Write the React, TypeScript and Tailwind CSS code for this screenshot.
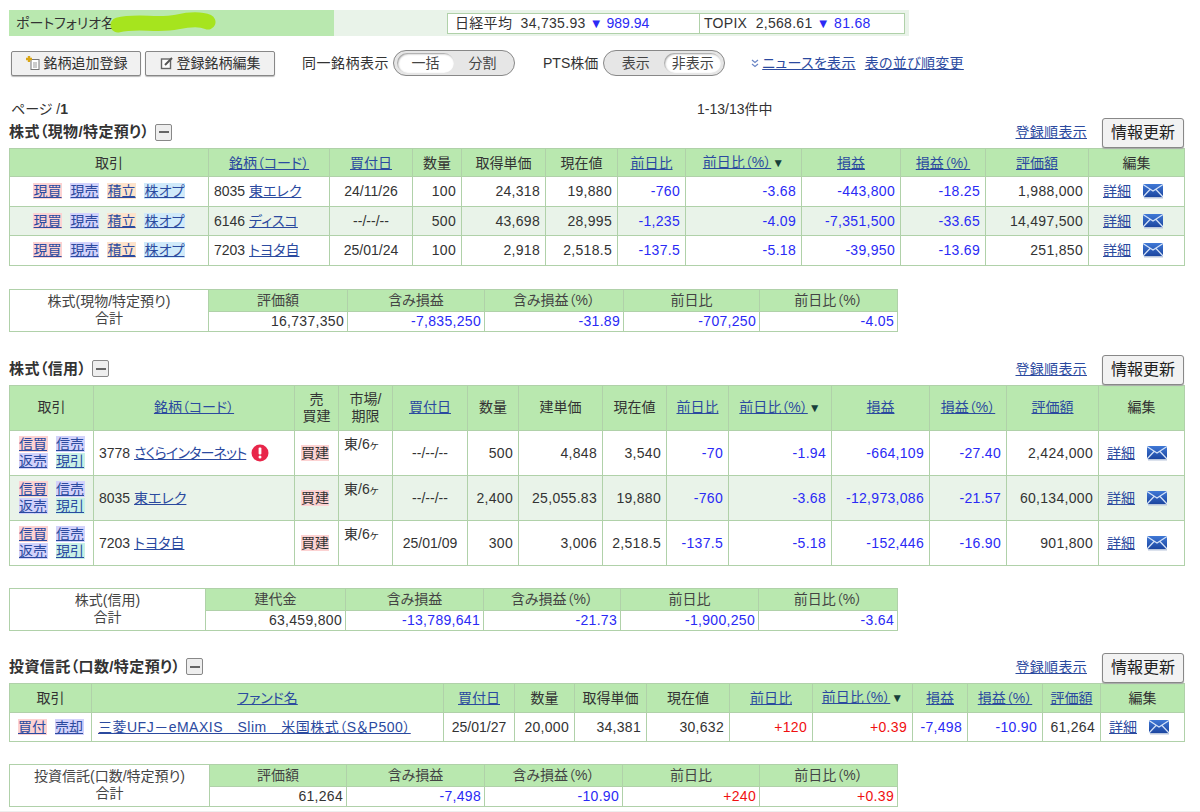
import type { ReactNode } from 'react'

type Col = { label: ReactNode; w: string; link?: boolean; arrow?: boolean }
type Tone = 'up' | 'down' | 'plain'
type Sum = { label: string; w: string; value: string; tone: Tone }

const tagColors: Record<string, string> = {
  現買: 'bg-[#fcd2d2]',
  現売: 'bg-[#d2d2fb]',
  積立: 'bg-[#fde3cb]',
  株オプ: 'bg-[#d0eafa]',
  信買: 'bg-[#fcd2d2]',
  信売: 'bg-[#d2d2fb]',
  返売: 'bg-[#d2d2fb]',
  現引: 'bg-[#c8f0e6]',
  買付: 'bg-[#fcd2d2]',
  売却: 'bg-[#d2d2fb]',
}

const toneClass = (n: string) => (n.startsWith('+') ? 'text-[#f01010]' : n.startsWith('-') ? 'text-[#2a2af5]' : 'text-[#333]')

const border = 'border border-[#b0d1a9]'
const linkClass = 'text-[#2b4a9f] underline'

function Tag({ name }: { name: string }) {
  return <a className={`${linkClass} ${tagColors[name]} inline-block leading-[16px] px-[0.5px] text-center`}>{name}</a>
}

function MailIcon() {
  return (
    <svg width="22" height="16" viewBox="0 0 22 16" className="inline-block">
      <defs>
        <linearGradient id="mail" x1="0" y1="0" x2="0" y2="1">
          <stop offset="0" stopColor="#3f78d6" />
          <stop offset="1" stopColor="#1c46a0" />
        </linearGradient>
      </defs>
      <rect x="1" y="1" width="20" height="13" fill="url(#mail)" />
      <path d="M1 1.5 L11 8 L21 1.5 M1 14 L8 6.5 M21 14 L14 6.5" stroke="#d5e3f8" strokeWidth="1.2" fill="none" />
      <rect x="2" y="14" width="19" height="1.5" fill="#b9c6dc" />
    </svg>
  )
}

function AlertIcon() {
  return (
    <svg width="18" height="18" viewBox="0 0 18 18" className="inline-block ml-[5px] align-[-4px]">
      <circle cx="9" cy="9" r="8.5" fill="#e8264a" />
      <rect x="7.6" y="3.5" width="2.8" height="7" rx="1" fill="#fff" />
      <circle cx="9" cy="13" r="1.5" fill="#fff" />
    </svg>
  )
}

function MinusBox() {
  return (
    <span className="inline-flex items-center justify-center w-[17px] h-[17px] border border-[#888] rounded-[2px] bg-[#eee] ml-[6px]">
      <span className="w-[10px] h-[2px] bg-[#666]" />
    </span>
  )
}

function SectionTitle({ title }: { title: string }) {
  return (
    <div className="flex items-center justify-between h-[30px] pl-[9px] pr-4">
      <div className="flex items-center pb-[2px] font-bold text-[15px] tracking-[0.4px] text-[#333]">
        {title}
        <MinusBox />
      </div>
      <div className="flex items-center">
        <a className={`${linkClass} mr-[15px] pb-[2px] tracking-[0.3px]`}>登録順表示</a>
        <button className="w-[82px] h-[30px] border border-[#888] rounded-[3px] bg-[#f2f2f2] text-[16px] text-[#222] shadow-[0_1px_1px_#aaa]">
          情報更新
        </button>
      </div>
    </div>
  )
}

function Head({ cols, rowClass }: { cols: Col[]; rowClass: string }) {
  return (
    <thead>
      <tr className={`bg-[#b9e8af] ${rowClass}`}>
        {cols.map((c, i) => (
          <th key={i} className={`${border} ${c.w} font-normal text-center p-0 text-[#333]`}>
            {c.link ? <a className={linkClass}>{c.label}</a> : c.label}
            {c.arrow && <span className="text-[#16403a] text-[12px] ml-px">▼</span>}
          </th>
        ))}
      </tr>
    </thead>
  )
}

function Num({ v }: { v: string }) {
  return <td className={`${border} text-right pr-[5px] pl-0 tracking-[0.3px] ${toneClass(v)}`}>{v}</td>
}

function Edit({ pad }: { pad: string }) {
  return (
    <td className={`${border} p-0`}>
      <div className={`flex items-center gap-[11px] ${pad}`}>
        <a className={linkClass}>詳細</a>
        <MailIcon />
      </div>
    </td>
  )
}

function Summary({ title, first, items }: { title: string; first: string; items: Sum[] }) {
  return (
    <table className="table-fixed border-collapse w-[888px] ml-[9px] text-[#444]">
      <tbody>
        <tr className="bg-[#b9e8af] h-[22px]">
          <td rowSpan={2} className={`${border} ${first} bg-white text-center leading-[17px]`}>
            {title}
            <br />
            合計
          </td>
          {items.map((s) => (
            <td key={s.label} className={`${border} ${s.w} text-center`}>
              {s.label}
            </td>
          ))}
        </tr>
        <tr className="h-[20px] leading-[18px]">
          {items.map((s) => (
            <td key={s.label} className={`${border} text-right pr-[3px] tracking-[0.3px] ${toneClass(s.value)}`}>
              {s.value}
            </td>
          ))}
        </tr>
      </tbody>
    </table>
  )
}

const spotCols: Col[] = [
  { label: '取引', w: 'w-[199px]' },
  { label: '銘柄（コード）', w: 'w-[121px]', link: true },
  { label: '買付日', w: 'w-[83px]', link: true },
  { label: '数量', w: 'w-[49px]' },
  { label: '取得単価', w: 'w-[84px]' },
  { label: '現在値', w: 'w-[72px]' },
  { label: '前日比', w: 'w-[68px]', link: true },
  { label: '前日比（%）', w: 'w-[116px]', link: true, arrow: true },
  { label: '損益', w: 'w-[99px]', link: true },
  { label: '損益（%）', w: 'w-[85px]', link: true },
  { label: '評価額', w: 'w-[103px]', link: true },
  { label: '編集', w: 'w-[96px]' },
]

const spotRows = [
  { code: '8035', name: '東エレク', date: '24/11/26', nums: ['100', '24,318', '19,880', '-760', '-3.68', '-443,800', '-18.25', '1,988,000'] },
  { code: '6146', name: 'ディスコ', date: '--/--/--', nums: ['500', '43,698', '28,995', '-1,235', '-4.09', '-7,351,500', '-33.65', '14,497,500'] },
  { code: '7203', name: 'トヨタ自', date: '25/01/24', nums: ['100', '2,918', '2,518.5', '-137.5', '-5.18', '-39,950', '-13.69', '251,850'] },
]

const marginCols: Col[] = [
  { label: '取引', w: 'w-[84px]' },
  { label: '銘柄（コード）', w: 'w-[201px]', link: true },
  { label: <>売<br />買建</>, w: 'w-[44px]' },
  { label: <>市場/<br />期限</>, w: 'w-[54px]' },
  { label: '買付日', w: 'w-[75px]', link: true },
  { label: '数量', w: 'w-[51px]' },
  { label: '建単価', w: 'w-[84px]' },
  { label: '現在値', w: 'w-[64px]' },
  { label: '前日比', w: 'w-[62px]', link: true },
  { label: '前日比（%）', w: 'w-[103px]', link: true, arrow: true },
  { label: '損益', w: 'w-[98px]', link: true },
  { label: '損益（%）', w: 'w-[77px]', link: true },
  { label: '評価額', w: 'w-[92px]', link: true },
  { label: '編集', w: 'w-[86px]' },
]

const marginRows = [
  { code: '3778', name: 'さくらインターネット', alert: true, date: '--/--/--', nums: ['500', '4,848', '3,540', '-70', '-1.94', '-664,109', '-27.40', '2,424,000'] },
  { code: '8035', name: '東エレク', alert: false, date: '--/--/--', nums: ['2,400', '25,055.83', '19,880', '-760', '-3.68', '-12,973,086', '-21.57', '60,134,000'] },
  { code: '7203', name: 'トヨタ自', alert: false, date: '25/01/09', nums: ['300', '3,006', '2,518.5', '-137.5', '-5.18', '-152,446', '-16.90', '901,800'] },
]

const fundCols: Col[] = [
  { label: '取引', w: 'w-[82px]' },
  { label: 'ファンド名', w: 'w-[352px]', link: true },
  { label: '買付日', w: 'w-[71px]', link: true },
  { label: '数量', w: 'w-[60px]' },
  { label: '取得単価', w: 'w-[72px]' },
  { label: '現在値', w: 'w-[83px]' },
  { label: '前日比', w: 'w-[83px]', link: true },
  { label: '前日比（%）', w: 'w-[100px]', link: true, arrow: true },
  { label: '損益', w: 'w-[55px]', link: true },
  { label: '損益（%）', w: 'w-[75px]', link: true },
  { label: '評価額', w: 'w-[58px]', link: true },
  { label: '編集', w: 'w-[84px]' },
]

const fundNums = ['20,000', '34,381', '30,632', '+120', '+0.39', '-7,498', '-10.90', '61,264']

const spotSum: Sum[] = [
  { label: '評価額', w: 'w-[139px]', value: '16,737,350', tone: 'plain' },
  { label: '含み損益', w: 'w-[137px]', value: '-7,835,250', tone: 'down' },
  { label: '含み損益（%）', w: 'w-[139px]', value: '-31.89', tone: 'down' },
  { label: '前日比', w: 'w-[136px]', value: '-707,250', tone: 'down' },
  { label: '前日比（%）', w: 'w-[138px]', value: '-4.05', tone: 'down' },
]

const marginSum: Sum[] = [
  { label: '建代金', w: 'w-[140px]', value: '63,459,800', tone: 'plain' },
  { label: '含み損益', w: 'w-[138px]', value: '-13,789,641', tone: 'down' },
  { label: '含み損益（%）', w: 'w-[137px]', value: '-21.73', tone: 'down' },
  { label: '前日比', w: 'w-[138px]', value: '-1,900,250', tone: 'down' },
  { label: '前日比（%）', w: 'w-[139px]', value: '-3.64', tone: 'down' },
]

const fundSum: Sum[] = [
  { label: '評価額', w: 'w-[137px]', value: '61,264', tone: 'plain' },
  { label: '含み損益', w: 'w-[138px]', value: '-7,498', tone: 'down' },
  { label: '含み損益（%）', w: 'w-[138px]', value: '-10.90', tone: 'down' },
  { label: '前日比', w: 'w-[137px]', value: '+240', tone: 'up' },
  { label: '前日比（%）', w: 'w-[138px]', value: '+0.39', tone: 'up' },
]

function Toggle({ left, right, active }: { left: string; right: string; active: 'left' | 'right' }) {
  const on = 'bg-white rounded-full shadow-[inset_1px_1px_2px_#999]'
  return (
    <div className="flex items-center w-[122px] h-[26px] rounded-full border border-[#888] bg-[#e6e6e6] px-[3px] text-[#444]">
      <span className={`flex-1 text-center h-[20px] leading-[20px] ${active === 'left' ? on : ''}`}>{left}</span>
      <span className={`flex-1 text-center h-[20px] leading-[20px] ${active === 'right' ? on : ''}`}>{right}</span>
    </div>
  )
}

function ToolButton({ icon, label }: { icon: ReactNode; label: string }) {
  return (
    <button className="flex items-center justify-center gap-[3px] w-[130px] h-[25px] border border-[#888] rounded-[2px] bg-[#f1f1f1] text-[#333] shadow-[0_1px_1px_#bbb]">
      {icon}
      {label}
    </button>
  )
}

export default function App() {
  return (
    <div className="w-[1200px] h-[812px] overflow-hidden bg-white text-[14px] leading-[20px] text-[#333] [font-feature-settings:'palt'] font-['Liberation_Sans','Noto_Sans_CJK_JP',sans-serif]">
      <div className="flex items-center h-[26px] mt-[10px] ml-[9px] w-[900px] bg-[#e9f3e9]">
        <div className="relative w-[325px] h-[26px] bg-[#b9e8af] pl-[7px] leading-[26px] text-[#333]">
          ポートフォリオ名
          <svg width="108" height="24" viewBox="0 0 108 24" className="absolute left-[100px] top-[1px]">
            <path d="M9 14 C28 9 48 15 68 11 C82 8 92 8 99 11" stroke="#a6e41e" strokeWidth="15" strokeLinecap="round" fill="none" />
          </svg>
        </div>
        <div className="ml-[113px] flex h-[21px] w-[458px] border border-[#b0d1a9] bg-white leading-[19px]">
          <div className="w-[252px] pl-[7px] border-r border-[#b0d1a9] whitespace-nowrap tracking-[0.3px]">
            日経平均&nbsp; 34,735.93 <span className="text-[#2a2af5] tracking-normal"><span className="text-[13px]">▼</span> 989.94</span>
          </div>
          <div className="pl-[4px] whitespace-nowrap tracking-[0.3px]">
            TOPIX&nbsp; 2,568.61 <span className="text-[#2a2af5]"><span className="text-[13px]">▼</span> 81.68</span>
          </div>
        </div>
      </div>

      <div className="flex items-center h-[26px] mt-[14px] pl-[11px]">
        <ToolButton
          label="銘柄追加登録"
          icon={
            <svg width="16" height="16" viewBox="0 0 16 16">
              <rect x="6" y="4.5" width="8" height="10" fill="#fff" stroke="#777" />
              <path d="M8 8h4M8 10h4M8 12h4" stroke="#999" />
              <path d="M4 1v6M1 4h6" stroke="#d9a514" strokeWidth="2.4" />
            </svg>
          }
        />
        <div className="ml-[4px]">
          <ToolButton
            label="登録銘柄編集"
            icon={
              <svg width="14" height="14" viewBox="0 0 14 14">
                <rect x="1.5" y="3" width="9" height="9.5" fill="#fff" stroke="#666" strokeWidth="1.4" />
                <path d="M5 9 L12 2" stroke="#555" strokeWidth="2" />
              </svg>
            }
          />
        </div>
        <span className="ml-[27px] mr-[4px] tracking-[0.5px] text-[#333]">同一銘柄表示</span>
        <Toggle left="一括" right="分割" active="left" />
        <span className="ml-[28px] mr-[5px] text-[#333]">PTS株価</span>
        <Toggle left="表示" right="非表示" active="right" />
        <svg width="8" height="9" viewBox="0 0 8 9" className="ml-[26px] mr-[3px]">
          <path d="M1 1l3 2.5L7 1M1 5l3 2.5L7 5" stroke="#6a85c5" strokeWidth="1.2" fill="none" />
        </svg>
        <a className={`${linkClass} text-[14px] tracking-[0.3px]`}>ニュースを表示</a>
        <a className={`${linkClass} text-[14px] ml-[9px] tracking-[0.3px]`}>表の並び順変更</a>
      </div>

      <div className="flex h-[16px] mt-[25px] mb-px pl-[11px] leading-[16px]">
        <span className="w-[686px]">
          ページ /<b>1</b>
        </span>
        <span>1-13/13件中</span>
      </div>

      <SectionTitle title="株式（現物/特定預り）" />
      <table className="table-fixed border-collapse w-[1175px] ml-[9px]">
        <Head cols={spotCols} rowClass="h-[28px]" />
        <tbody>
          {spotRows.map((r, i) => (
            <tr key={r.code} className={`h-[29.5px] ${i === 1 ? 'bg-[#e9f3e9]' : 'bg-white'}`}>
              <td className={`${border} p-0`}>
                <div className="flex justify-center gap-[8px]">
                  {['現買', '現売', '積立', '株オプ'].map((t) => (
                    <Tag key={t} name={t} />
                  ))}
                </div>
              </td>
              <td className={`${border} pl-[5px] whitespace-nowrap`}>
                {r.code} <a className={linkClass}>{r.name}</a>
              </td>
              <td className={`${border} text-center`}>{r.date}</td>
              {r.nums.map((n, j) => (
                <Num key={j} v={n} />
              ))}
              <Edit pad="pl-[14px]" />
            </tr>
          ))}
        </tbody>
      </table>

      <div className="mt-[23px]">
        <Summary title="株式(現物/特定預り)" first="w-[199px]" items={spotSum} />
      </div>

      <div className="mt-[23px]">
        <SectionTitle title="株式（信用）" />
      </div>
      <table className="table-fixed border-collapse w-[1175px] ml-[9px]">
        <Head cols={marginCols} rowClass="h-[45px] leading-[17px]" />
        <tbody>
          {marginRows.map((r, i) => (
            <tr key={r.code} className={`h-[45px] ${i === 1 ? 'bg-[#e9f3e9]' : 'bg-white'}`}>
              <td className={`${border} p-0`}>
                <div className="grid grid-cols-[29px_29px] justify-center gap-x-[8px] gap-y-px">
                  {['信買', '信売', '返売', '現引'].map((t) => (
                    <Tag key={t} name={t} />
                  ))}
                </div>
              </td>
              <td className={`${border} pl-[5px] whitespace-nowrap`}>
                {r.code} <a className={`${linkClass} ${r.alert ? 'tracking-[-0.8px]' : ''}`}>{r.name}</a>
                {r.alert && <AlertIcon />}
              </td>
              <td className={`${border} text-center p-0 pr-[3px]`}>
                <span className="bg-[#fcd2d2] inline-block leading-[16px]">買建</span>
              </td>
              <td className={`${border} align-top pl-[5px] pt-[3px] whitespace-nowrap`}>
                東/6<span className="text-[11px]">ヶ</span>
              </td>
              <td className={`${border} text-center`}>{r.date}</td>
              {r.nums.map((n, j) => (
                <Num key={j} v={n} />
              ))}
              <Edit pad="pl-[8px]" />
            </tr>
          ))}
        </tbody>
      </table>

      <div className="mt-[22px]">
        <Summary title="株式(信用)" first="w-[196px]" items={marginSum} />
      </div>

      <div className="mt-[22px]">
        <SectionTitle title="投資信託（口数/特定預り）" />
      </div>
      <table className="table-fixed border-collapse w-[1175px] ml-[9px]">
        <Head cols={fundCols} rowClass="h-[29px]" />
        <tbody>
          <tr className="h-[29px] bg-white">
            <td className={`${border} p-0`}>
              <div className="flex justify-center gap-[8px]">
                <Tag name="買付" />
                <Tag name="売却" />
              </div>
            </td>
            <td className={`${border} pl-[6px] whitespace-nowrap`}>
              <a className={`${linkClass} tracking-[0.5px]`}>三菱UFJ－eMAXIS　Slim　米国株式（S＆P500）</a>
            </td>
            <td className={`${border} text-center p-0`}>25/01/27</td>
            {fundNums.map((n, j) => (
              <Num key={j} v={n} />
            ))}
            <Edit pad="pl-[8px]" />
          </tr>
        </tbody>
      </table>

      <div className="mt-[22px]">
        <Summary title="投資信託(口数/特定預り)" first="w-[200px]" items={fundSum} />
      </div>
      <div className="mt-[4px] h-px bg-[#eee]" />
    </div>
  )
}
